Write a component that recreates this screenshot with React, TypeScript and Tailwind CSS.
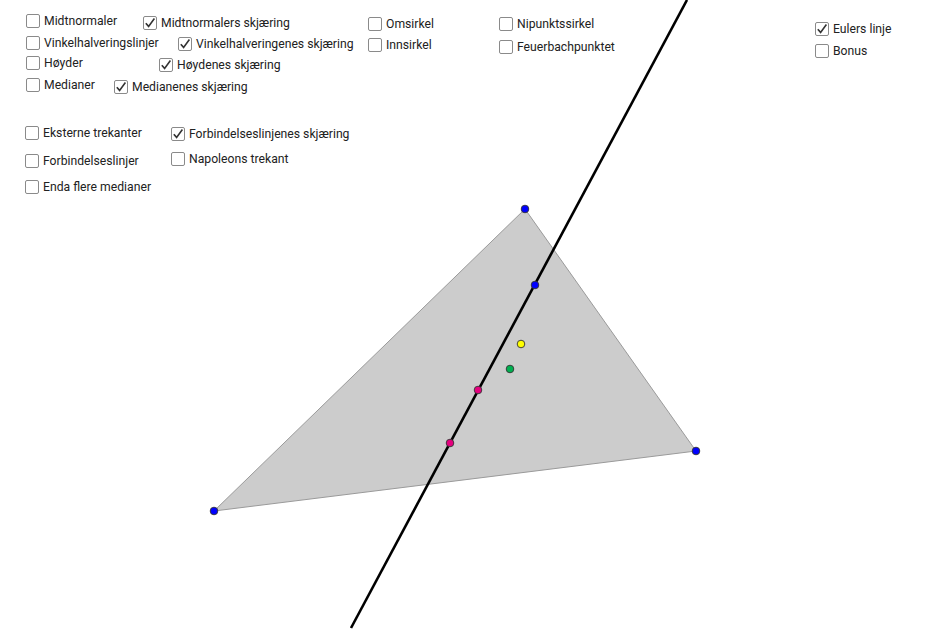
import React from 'react';

type Box = { label: string; x: number; y: number; checked?: boolean };

// checkbox positions on the applet canvas (box top-left)
const BOXES: Box[] = [
  { label: 'Midtnormaler', x: 26, y: 14 },
  { label: 'Midtnormalers skjæring', x: 143, y: 16, checked: true },
  { label: 'Vinkelhalveringslinjer', x: 26, y: 36 },
  { label: 'Vinkelhalveringenes skjæring', x: 178, y: 37, checked: true },
  { label: 'Høyder', x: 26, y: 56 },
  { label: 'Høydenes skjæring', x: 159, y: 58, checked: true },
  { label: 'Medianer', x: 26, y: 78 },
  { label: 'Medianenes skjæring', x: 114, y: 80, checked: true },
  { label: 'Omsirkel', x: 368, y: 17 },
  { label: 'Innsirkel', x: 368, y: 38 },
  { label: 'Nipunktssirkel', x: 499, y: 17 },
  { label: 'Feuerbachpunktet', x: 499, y: 40 },
  { label: 'Eulers linje', x: 815, y: 22, checked: true },
  { label: 'Bonus', x: 815, y: 44 },
  { label: 'Eksterne trekanter', x: 25, y: 126 },
  { label: 'Forbindelseslinjenes skjæring', x: 171, y: 127, checked: true },
  { label: 'Forbindelseslinjer', x: 25, y: 154 },
  { label: 'Napoleons trekant', x: 171, y: 152 },
  { label: 'Enda flere medianer', x: 25, y: 180 },
];

const POINTS = [
  { x: 525, y: 209, c: '#0000ff' },
  { x: 696, y: 451, c: '#0000ff' },
  { x: 214, y: 511, c: '#0000ff' },
  { x: 535, y: 285, c: '#0000ff' },
  { x: 478, y: 390, c: '#e5007e' },
  { x: 450, y: 443, c: '#e5007e' },
  { x: 521, y: 344, c: '#ffff00' },
  { x: 510, y: 369, c: '#00b050' },
];

function Check({ label, x, y, checked }: Box) {
  return (
    <label
      className="absolute flex items-center gap-[4px] text-[12.2px] leading-none text-[#222] cursor-pointer select-none"
      style={{ left: x, top: y }}
    >
      <span className="w-[14px] h-[14px] rounded-[2px] border border-[#8a8a8a] bg-white flex items-center justify-center">
        {checked && (
          <svg width="12" height="12" viewBox="0 0 12 12">
            <path d="M1.8 6.2 L4.6 9.4 L10.4 1.6" fill="none" stroke="#333" strokeWidth="1.6" />
          </svg>
        )}
      </span>
      <span>{label}</span>
    </label>
  );
}

export default function App() {
  return (
    <div
      className="relative w-[930px] h-[630px] bg-white overflow-hidden"
      style={{ fontFamily: 'Roboto, "Liberation Sans", sans-serif' }}
    >
      <svg className="absolute inset-0" width="930" height="630">
        <polygon points="525,209 696,451 214,511" fill="#cccccc" stroke="#9a9a9a" strokeWidth="1" />
        <line x1="687" y1="0" x2="351" y2="628" stroke="#000" strokeWidth="2.6" />
        {POINTS.map((p, i) => (
          <circle key={i} cx={p.x} cy={p.y} r="3.8" fill={p.c} stroke="#333" strokeWidth="0.9" />
        ))}
      </svg>
      {BOXES.map((b) => (
        <Check key={b.label} {...b} />
      ))}
    </div>
  );
}
